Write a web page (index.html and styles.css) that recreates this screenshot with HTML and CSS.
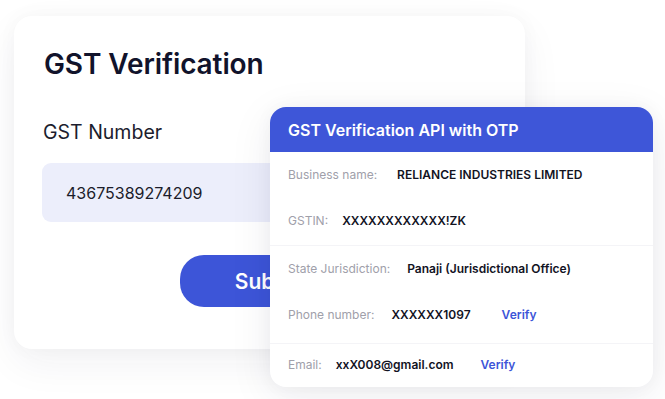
FILE: index.html
```html
<!DOCTYPE html>
<html lang="en">
<head>
<meta charset="utf-8">
<title>GST Verification</title>
<link rel="stylesheet" href="styles.css">
</head>
<body>
<div class="stage">
  <section class="form-card">
    <h1 class="title">GST Verification</h1>
    <label class="field-label">GST Number</label>
    <div class="input">43675389274209</div>
    <div class="actions">
      <button class="submit">Submit</button>
    </div>
  </section>

  <section class="result-card">
    <header class="result-head">GST Verification API with OTP</header>
    <div class="group g1">
      <div class="row"><span class="lbl wide">Business name:</span><span class="val">RELIANCE INDUSTRIES LIMITED</span></div>
      <div class="row"><span class="lbl tight">GSTIN:</span><span class="val">XXXXXXXXXXXX!ZK</span></div>
    </div>
    <div class="group g2">
      <div class="row"><span class="lbl">State Jurisdiction:</span><span class="val">Panaji (Jurisdictional Office)</span></div>
      <div class="row"><span class="lbl">Phone number:</span><span class="val">XXXXXX1097</span><a class="verify">Verify</a></div>
    </div>
    <div class="group g3">
      <div class="row"><span class="lbl tight">Email:</span><span class="val">xxX008@gmail.com</span><a class="verify near">Verify</a></div>
    </div>
  </section>
</div>
</body>
</html>
```

FILE: styles.css
```css
* { box-sizing: border-box; }
html, body { margin: 0; padding: 0; }
body {
  background: #ffffff;
  font-family: Inter, "Noto Sans", Arial, sans-serif;
  width: 665px;
  height: 399px;
  overflow: hidden;
}
.stage {
  position: relative;
  width: 665px;
  height: 399px;
  padding: 16px 0 0 14px;
}
.form-card {
  width: 511px;
  height: 333px;
  background: #fff;
  border-radius: 18px;
  box-shadow: 0 14px 40px rgba(30, 30, 60, 0.06), 0 0 20px rgba(30, 30, 60, 0.03);
  padding: 30px 0 0 30px;
  display: flex;
  flex-direction: column;
}
.title {
  margin: 0;
  font-size: 28px;
  line-height: 36px;
  font-weight: 600;
  color: #11132b;
  letter-spacing: -0.1px;
}
.field-label {
  margin-top: 38px;
  margin-left: -1px;
  font-size: 19.5px;
  line-height: 24px;
  color: #1c1d2e;
}
.input {
  margin-top: 19px;
  margin-left: -2px;
  width: 300px;
  height: 59px;
  border-radius: 9px;
  background: #eceefb;
  padding-left: 24px;
  display: flex;
  align-items: center;
  font-size: 16px;
  color: #1b1c2a;
}
.actions {
  margin-top: 33px;
  margin-left: -30px;
  display: flex;
  justify-content: center;
}
.submit {
  width: 180px;
  height: 52px;
  border: 0;
  border-radius: 24px;
  background: #3d55d8;
  color: #fff;
  font-family: inherit;
  font-size: 21px;
  font-weight: 600;
  padding-right: 4px;
}
.result-card {
  position: absolute;
  left: 270px;
  top: 107px;
  width: 383px;
  height: 280px;
  background: #fff;
  border-radius: 16px;
  overflow: hidden;
  box-shadow: 0 10px 44px rgba(30, 30, 60, 0.08), 0 0 18px rgba(30, 30, 60, 0.04);
}
.result-head {
  height: 45px;
  background: #3e56d8;
  color: #fff;
  font-size: 16px;
  font-weight: 600;
  padding-left: 18px;
  display: flex;
  align-items: center;
}
.group {
  padding-left: 18px;
  display: flex;
  flex-direction: column;
  gap: 22px;
}
.g1 { padding-top: 10px; padding-bottom: 13px; }
.g2 { padding-top: 10px; padding-bottom: 17px; border-top: 1px solid #f4f4f7; }
.g3 { padding-top: 8px; border-top: 1px solid #f4f4f7; }
.row {
  height: 24px;
  display: flex;
  align-items: center;
  font-size: 12px;
  white-space: nowrap;
}
.lbl {
  color: #a0a0aa;
  margin-right: 17px;
}
.lbl.wide { margin-right: 20px; }
.lbl.tight { margin-right: 14px; }
.val {
  color: #12131f;
  font-weight: 600;
}
.verify {
  color: #3d55d8;
  font-weight: 600;
  margin-left: 31px;
  font-size: 12px;
}
.verify.near { margin-left: 27px; }
```
